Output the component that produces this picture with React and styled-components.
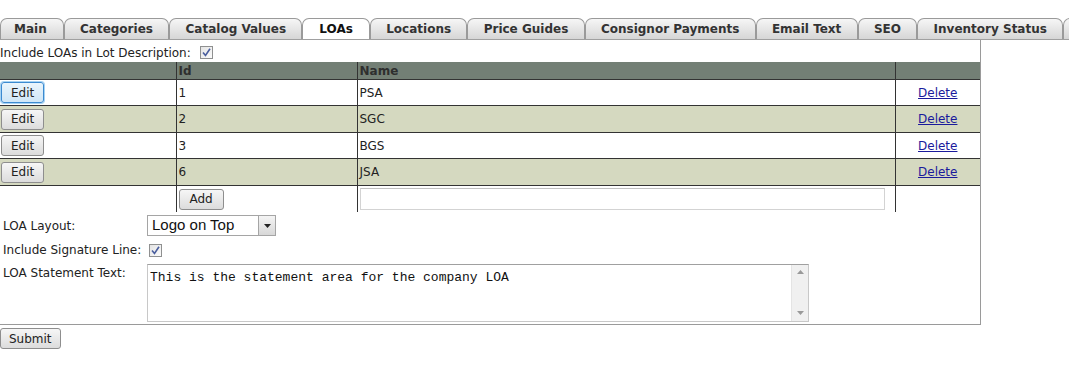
import React from "react";
import styled, { createGlobalStyle, css } from "styled-components";

const GlobalStyle = createGlobalStyle`
  body {
    margin: 0;
    background: #fff;
    font-family: "DejaVu Sans", Verdana, sans-serif;
    font-size: 12px;
    color: #222;
    overflow: hidden;
  }
`;

const Page = styled.div`
  width: 1069px;
  padding-top: 18px;
`;

const TabBar = styled.ul`
  display: flex;
  list-style: none;
  margin: 0;
  padding: 0;
  height: 21px;
  border-bottom: 1px solid #a0a0a0;
  overflow: hidden;
  white-space: nowrap;
`;

const Tab = styled.li`
  flex: none;
  min-width: 20px;
  height: 20px;
  line-height: 21px;
  padding: 0 15.3px;
  border: 1px solid #9a9a9a;
  border-bottom: none;
  border-radius: 7px 7px 0 0;
  font-weight: bold;
  font-size: 12px;
  color: #333;
  background: linear-gradient(#f6f6f6, #d6d6d6);
  &:first-child {
    padding-left: 13px;
    padding-right: 16px;
  }
  ${(p) =>
    p.$active &&
    css`
      background: #fff;
      color: #111;
      padding: 0 16px;
    `}
`;

const Panel = styled.div`
  width: 980px;
  border-right: 1px solid #9a9a9a;
  border-bottom: 1px solid #9a9a9a;
  padding-bottom: 2px;
`;

const CheckRow = styled.div`
  display: flex;
  align-items: center;
  gap: 9px;
  height: 19px;
  padding-top: 3px;
`;

const Box = styled.span`
  display: inline-flex;
  align-items: center;
  justify-content: center;
  width: 11px;
  height: 11px;
  border: 1px solid #8f9090;
  background: linear-gradient(135deg, #e4e4e4, #fbfbfb);
`;

const Check = () => (
  <Box>
    <svg width="9" height="9" viewBox="0 0 9 9">
      <path d="M1 4.5 L3.5 7.5 L8 0.8" fill="none" stroke="#4a5e9e" strokeWidth="1.6" />
    </svg>
  </Box>
);

const Grid = styled.table`
  width: 980px;
  border-collapse: collapse;
  table-layout: fixed;
`;

const Th = styled.th`
  height: 17px;
  padding: 0 2px;
  text-align: left;
  font-weight: bold;
  font-size: 12px;
  color: #2e2e2e;
  background: #737f75;
  border-bottom: 1px solid #333;
  border-left: 1px solid #333;
  &:first-child {
    border-left: none;
  }
`;

const Tr = styled.tr`
  background: ${(p) => (p.$alt ? "#d5d9c0" : "#fff")};
`;

const Td = styled.td`
  height: ${(p) => (p.$tall ? 26 : 25)}px;
  padding: 0 2px;
  color: #222;
  text-align: ${(p) => (p.$center ? "center" : "left")};
  border-left: 1px solid #333;
  border-bottom: ${(p) => (p.$last ? "none" : "1px solid #333")};
  &:first-child {
    border-left: none;
    padding: 0 1px;
  }
`;

const Button = styled.button`
  font-family: "DejaVu Sans", Verdana, sans-serif;
  font-size: 12px;
  color: #222;
  height: 21px;
  padding: 0 ${(p) => p.$pad || 9}px;
  border: 1px solid ${(p) => (p.$focus ? "#3c8ad0" : "#8e8e8e")};
  border-radius: 3px;
  background: ${(p) =>
    p.$focus
      ? "linear-gradient(#eaf5fc, #cfe6f6)"
      : "linear-gradient(#f6f6f6, #dcdcdc)"};
  box-shadow: ${(p) => (p.$focus ? "0 0 0 1px #a6d3f3" : "none")};
`;

const DeleteLink = styled.a`
  color: #1a1a9c;
  text-decoration: underline;
`;

const TextInput = styled.input`
  box-sizing: border-box;
  width: 525px;
  height: 22px;
  border: 1px solid #d3d3d3;
  border-top-color: #c0c0c0;
  margin-left: 0;
`;

const Form = styled.div`
  display: grid;
  grid-template-columns: 147px 1fr;
  row-gap: 7px;
  padding-top: 3px;
  align-items: center;
`;

const Label = styled.div`
  padding-left: 3px;
  color: #222;
  align-self: ${(p) => (p.$top ? "start" : "center")};
  padding-top: ${(p) => (p.$top ? 2 : 0)}px;
`;

const Select = styled.div`
  display: flex;
  width: 129px;
  height: 21px;
  box-sizing: border-box;
  border: 1px solid #a5a5a5;
  font-family: "Liberation Sans", Arial, sans-serif;
  font-size: 15px;
  color: #111;
`;

const SelectText = styled.span`
  flex: 1;
  padding-left: 4px;
  line-height: 18px;
`;

const SelectArrow = styled.span`
  width: 16px;
  border-left: 1px solid #a5a5a5;
  background: linear-gradient(#f4f4f4, #d8d8d8);
  display: flex;
  align-items: center;
  justify-content: center;
`;

const CheckCell = styled.div`
  padding-left: 2px;
  display: flex;
`;

const TextAreaBox = styled.div`
  display: flex;
  width: 662px;
  height: 58px;
  box-sizing: border-box;
  border: 1px solid #c8c8c8;
  border-top-color: #a0a0a0;
`;

const TextArea = styled.textarea`
  flex: 1;
  border: none;
  resize: none;
  padding: 5px 2px 3px;
  font-family: "Liberation Mono", "Courier New", monospace;
  font-size: 13px;
  color: #111;
  outline: none;
  overflow: hidden;
`;

const Scrollbar = styled.div`
  width: 16px;
  background: #f0f0f0;
  border-left: 1px solid #e4e4e4;
  display: flex;
  flex-direction: column;
  justify-content: space-between;
  align-items: center;
  padding: 5px 0 6px;
`;

const Arrow = ({ down, color = "#999" }) => (
  <svg width="7" height="4" viewBox="0 0 7 4">
    <path d={down ? "M0 0 H7 L3.5 4 Z" : "M0 4 H7 L3.5 0 Z"} fill={color} />
  </svg>
);

const SubmitRow = styled.div`
  padding-top: 3px;
`;

const tabs = [
  "Main",
  "Categories",
  "Catalog Values",
  "LOAs",
  "Locations",
  "Price Guides",
  "Consignor Payments",
  "Email Text",
  "SEO",
  "Inventory Status",
  "",
];

const rows = [
  { id: 1, name: "PSA" },
  { id: 2, name: "SGC" },
  { id: 3, name: "BGS" },
  { id: 6, name: "JSA" },
];

export default function App() {
  return (
    <Page>
      <GlobalStyle />
      <TabBar>
        {tabs.map((t, i) => (
          <Tab key={i} $active={t === "LOAs"}>
            {t}
          </Tab>
        ))}
      </TabBar>
      <Panel>
        <CheckRow>
          <span>Include LOAs in Lot Description:</span>
          <Check />
        </CheckRow>
        <Grid>
          <colgroup>
            <col style={{ width: 176 }} />
            <col style={{ width: 181 }} />
            <col style={{ width: 538 }} />
            <col style={{ width: 85 }} />
          </colgroup>
          <thead>
            <tr>
              <Th />
              <Th>Id</Th>
              <Th>Name</Th>
              <Th />
            </tr>
          </thead>
          <tbody>
            {rows.map((r, i) => {
              const alt = i % 2 === 1;
              return (
                <Tr key={r.id} $alt={alt}>
                  <Td $tall={alt}>
                    <Button $focus={i === 0}>Edit</Button>
                  </Td>
                  <Td $tall={alt}>{r.id}</Td>
                  <Td $tall={alt}>{r.name}</Td>
                  <Td $tall={alt} $center>
                    <DeleteLink href="#">Delete</DeleteLink>
                  </Td>
                </Tr>
              );
            })}
            <Tr>
              <Td $last $tall />
              <Td $last $tall>
                <Button $pad={10}>Add</Button>
              </Td>
              <Td $last $tall>
                <TextInput type="text" />
              </Td>
              <Td $last $tall />
            </Tr>
          </tbody>
        </Grid>
        <Form>
          <Label>LOA Layout:</Label>
          <div>
            <Select>
              <SelectText>Logo on Top</SelectText>
              <SelectArrow>
                <Arrow down color="#222" />
              </SelectArrow>
            </Select>
          </div>
          <Label>Include Signature Line:</Label>
          <CheckCell>
            <Check />
          </CheckCell>
          <Label $top>LOA Statement Text:</Label>
          <TextAreaBox>
            <TextArea defaultValue="This is the statement area for the company LOA" />
            <Scrollbar>
              <Arrow />
              <Arrow down />
            </Scrollbar>
          </TextAreaBox>
        </Form>
      </Panel>
      <SubmitRow>
        <Button $pad={8}>Submit</Button>
      </SubmitRow>
    </Page>
  );
}
